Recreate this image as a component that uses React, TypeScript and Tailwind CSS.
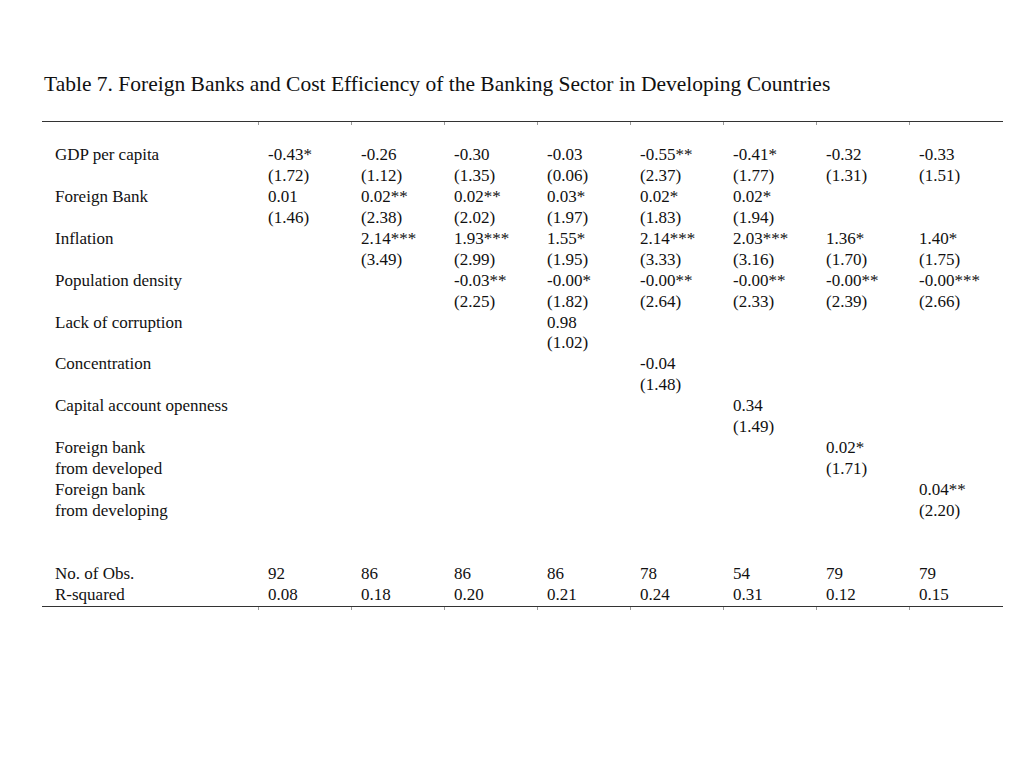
import React from "react";

type Row = { label: string[]; vals: string[][] };

const rows: Row[] = [
  {
    label: ["GDP per capita", ""],
    vals: [
      ["-0.43*", "(1.72)"],
      ["-0.26", "(1.12)"],
      ["-0.30", "(1.35)"],
      ["-0.03", "(0.06)"],
      ["-0.55**", "(2.37)"],
      ["-0.41*", "(1.77)"],
      ["-0.32", "(1.31)"],
      ["-0.33", "(1.51)"],
    ],
  },
  {
    label: ["Foreign Bank", ""],
    vals: [
      ["0.01", "(1.46)"],
      ["0.02**", "(2.38)"],
      ["0.02**", "(2.02)"],
      ["0.03*", "(1.97)"],
      ["0.02*", "(1.83)"],
      ["0.02*", "(1.94)"],
      ["", ""],
      ["", ""],
    ],
  },
  {
    label: ["Inflation", ""],
    vals: [
      ["", ""],
      ["2.14***", "(3.49)"],
      ["1.93***", "(2.99)"],
      ["1.55*", "(1.95)"],
      ["2.14***", "(3.33)"],
      ["2.03***", "(3.16)"],
      ["1.36*", "(1.70)"],
      ["1.40*", "(1.75)"],
    ],
  },
  {
    label: ["Population density", ""],
    vals: [
      ["", ""],
      ["", ""],
      ["-0.03**", "(2.25)"],
      ["-0.00*", "(1.82)"],
      ["-0.00**", "(2.64)"],
      ["-0.00**", "(2.33)"],
      ["-0.00**", "(2.39)"],
      ["-0.00***", "(2.66)"],
    ],
  },
  {
    label: ["Lack of corruption", ""],
    vals: [["", ""], ["", ""], ["", ""], ["0.98", "(1.02)"], ["", ""], ["", ""], ["", ""], ["", ""]],
  },
  {
    label: ["Concentration", ""],
    vals: [["", ""], ["", ""], ["", ""], ["", ""], ["-0.04", "(1.48)"], ["", ""], ["", ""], ["", ""]],
  },
  {
    label: ["Capital account openness", ""],
    vals: [["", ""], ["", ""], ["", ""], ["", ""], ["", ""], ["0.34", "(1.49)"], ["", ""], ["", ""]],
  },
  {
    label: ["Foreign bank", "from developed"],
    vals: [["", ""], ["", ""], ["", ""], ["", ""], ["", ""], ["", ""], ["0.02*", "(1.71)"], ["", ""]],
  },
  {
    label: ["Foreign bank", "from developing"],
    vals: [["", ""], ["", ""], ["", ""], ["", ""], ["", ""], ["", ""], ["", ""], ["0.04**", "(2.20)"]],
  },
  {
    label: ["", ""],
    vals: [["", ""], ["", ""], ["", ""], ["", ""], ["", ""], ["", ""], ["", ""], ["", ""]],
  },
  {
    label: ["No. of Obs.", "R-squared"],
    vals: [
      ["92", "0.08"],
      ["86", "0.18"],
      ["86", "0.20"],
      ["86", "0.21"],
      ["78", "0.24"],
      ["54", "0.31"],
      ["79", "0.12"],
      ["79", "0.15"],
    ],
  },
];

function Ticks() {
  return (
    <div className="grid grid-cols-[216px_repeat(8,93px)] h-[3px]">
      <div />
      {Array.from({ length: 8 }).map((_, i) => (
        <div key={i} className="border-l border-[#9a9a9a]" />
      ))}
    </div>
  );
}

export default function App() {
  return (
    <div
      className="w-[1024px] h-[768px] bg-white text-[#111] overflow-hidden"
      style={{ fontFamily: '"Liberation Serif", "Times New Roman", serif' }}
    >
      <div className="pt-[71px] pl-[44px] text-[21.5px] leading-[26px] whitespace-nowrap">
        Table 7. Foreign Banks and Cost Efficiency of the Banking Sector in Developing Countries
      </div>
      <div className="ml-[42px] mt-[24px] w-[961px]">
        <div className="border-t border-[#333]" />
        <Ticks />
        <div className="pt-[20px] text-[17px] leading-[20.94px]">
          {rows.map((r, ri) => (
            <div key={ri} className="grid grid-cols-[216px_repeat(8,93px)]">
              <div className="pl-[13px] whitespace-nowrap">
                <div className="h-[20.94px]">{r.label[0]}</div>
                <div className="h-[20.94px]">{r.label[1]}</div>
              </div>
              {r.vals.map((v, vi) => (
                <div key={vi} className="pl-[10px] whitespace-nowrap">
                  <div className="h-[20.94px]">{v[0]}</div>
                  <div className="h-[20.94px]">{v[1]}</div>
                </div>
              ))}
            </div>
          ))}
        </div>
        <div className="border-t border-[#333]" />
        <Ticks />
      </div>
    </div>
  );
}
